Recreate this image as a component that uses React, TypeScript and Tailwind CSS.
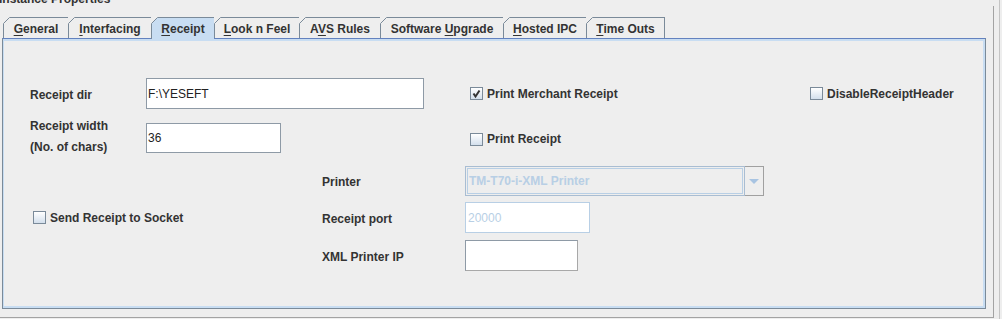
import React from "react";

interface TabDef {
  pre: string;
  key: string;
  post: string;
  width: string;
  selected?: boolean;
  last?: boolean;
}

const tabs: TabDef[] = [
  { pre: "", key: "G", post: "eneral", width: "w-[65px]" },
  { pre: "", key: "I", post: "nterfacing", width: "w-[83px]" },
  { pre: "", key: "R", post: "eceipt", width: "w-[63px]", selected: true },
  { pre: "", key: "L", post: "ook n Feel", width: "w-[85px]" },
  { pre: "A", key: "V", post: "S Rules", width: "w-[81px]" },
  { pre: "Software ", key: "U", post: "pgrade", width: "w-[123px]" },
  { pre: "", key: "H", post: "osted IPC", width: "w-[83px]" },
  { pre: "", key: "T", post: "ime Outs", width: "w-[79px]", last: true },
];

function Tab({ tab }: { tab: TabDef }) {
  return (
    <div
      className={`relative flex items-center justify-center border-l border-t border-[#7a8a99] ${tab.width} ${
        tab.selected ? "z-10 h-[22px] bg-[#c8ddf2]" : "h-[21px] bg-[#eeeeee] pt-[2px]"
      } ${tab.last ? "border-r" : ""}`}
    >
      {/* slanted corner */}
      <svg className="absolute -left-px -top-px" width="7" height="7" viewBox="0 0 7 7">
        <polygon points="0,0 7,0 0,7" fill="#eeeeee" />
        <line x1="0.5" y1="6.5" x2="6.5" y2="0.5" stroke="#7a8a99" strokeWidth="1" />
      </svg>
      <span className="font-bold text-[12px] leading-[14px] text-[#333333]">
        {tab.pre}
        <span className="underline underline-offset-[2px]">{tab.key}</span>
        {tab.post}
      </span>
    </div>
  );
}

function CheckBox({ label, checked }: { label: string; checked?: boolean }) {
  return (
    <div className="flex items-center gap-[4px]">
      <div className="w-[13px] h-[13px] border border-[#7a8a99] bg-linear-to-b from-[#ffffff] to-[#d3dfec] flex items-center justify-center">
        {checked && (
          <svg width="11" height="11" viewBox="0 0 11 11">
            <path d="M2.5 5.5 L4.5 8.5 L8.5 2.5" fill="none" stroke="#333333" strokeWidth="2" />
          </svg>
        )}
      </div>
      <span className="font-bold text-[12px] leading-[14px] text-[#333333]">{label}</span>
    </div>
  );
}

function Label({ children }: { children: React.ReactNode }) {
  return <span className="font-bold text-[12px] leading-[14px] text-[#333333]">{children}</span>;
}

export default function App() {
  return (
    <div
      className="w-[1002px] h-[319px] overflow-hidden bg-[#eeeeee] flex"
      style={{ fontFamily: '"Liberation Sans", Arial, sans-serif' }}
    >
      <div className="w-[994px] shrink-0 flex flex-col">
        {/* titled border caption */}
        <div className="-mt-[8px] -ml-[1px] h-[14px] font-bold text-[12px] leading-[14px] text-[#333333] whitespace-nowrap">
          Instance Properties
        </div>

        {/* titled border box */}
        <div className="-ml-[10px] w-[1004px] h-[312px] border-r border-b border-[#a3a3a3] pl-[12px] pt-[11px]">
          {/* tab strip */}
          <div className="flex items-start h-[21px] ml-px">
            {tabs.map((t) => (
              <Tab key={t.key + t.post} tab={t} />
            ))}
          </div>

          {/* content panel */}
          <div className="w-[984px] h-[271px] border border-[#7a8a99] border-t-[#6382bf]">
            <div className="h-full border-t-2 border-l border-r-2 border-b-2 border-[#c8ddf2] pt-[37px]">
              {/* row 1 */}
              <div className="flex items-center h-[31px] pl-[26px]">
                <div className="w-[116px]">
                  <Label>Receipt dir</Label>
                </div>
                <div className="w-[278px] h-[31px] border border-[#8e9aa6] bg-white flex items-center pl-[1px] text-[12px] text-[#222222]">
                  F:\YESEFT
                </div>
                <div className="ml-[46px] w-[340px]">
                  <CheckBox label="Print Merchant Receipt" checked />
                </div>
                <CheckBox label="DisableReceiptHeader" />
              </div>

              {/* row 2 */}
              <div className="flex items-start h-[42px] mt-[7px] pl-[26px]">
                <div className="w-[116px] flex flex-col font-bold text-[12px] leading-[21px] text-[#333333]">
                  <span>Receipt width</span>
                  <span>(No. of chars)</span>
                </div>
                <div className="mt-[7px] w-[135px] h-[30px] border border-[#8e9aa6] bg-white flex items-center pl-[1px] text-[12px] text-[#222222]">
                  36
                </div>
                <div className="ml-[189px] mt-[16px]">
                  <CheckBox label="Print Receipt" />
                </div>
              </div>

              {/* row 3 */}
              <div className="flex items-center h-[30px] mt-[8px]">
                <div className="w-[318px]" />
                <div className="w-[143px]">
                  <Label>Printer</Label>
                </div>
                <div className="flex w-[299px] h-[30px]">
                  <div className="flex-1 border border-[#a9bdd2] bg-[#eeeeee] p-px">
                    <div className="h-full border border-[#b8cfe5] flex items-center pl-px font-bold text-[12px] text-[#b8cfe5]">
                      TM-T70-i-XML Printer
                    </div>
                  </div>
                  <div className="w-[19px] border-y border-r border-[#a0a0a0] flex items-center justify-center">
                    <svg width="10" height="5" viewBox="0 0 10 5">
                      <polygon points="0,0 10,0 5,5" fill="#a8c4e2" />
                    </svg>
                  </div>
                </div>
              </div>

              {/* row 4 */}
              <div className="flex items-center h-[31px] mt-[6px]">
                <div className="w-[318px] pl-[29px]">
                  <CheckBox label="Send Receipt to Socket" />
                </div>
                <div className="w-[143px]">
                  <Label>Receipt port</Label>
                </div>
                <div className="w-[125px] h-[31px] border border-[#b8cfe5] bg-white flex items-center pl-[2px] text-[12px] text-[#b8cfe5]">
                  20000
                </div>
              </div>

              {/* row 5 */}
              <div className="flex items-center h-[31px] mt-[7px]">
                <div className="w-[318px]" />
                <div className="w-[143px]">
                  <Label>XML Printer IP</Label>
                </div>
                <div className="w-[113px] h-[31px] border border-[#8e9aa6] border-r-[#a8a8a8] border-b-[#a8a8a8] bg-white" />
              </div>
            </div>
          </div>
        </div>
      </div>
      <div className="w-[6px] shrink-0 border-r border-[#c4c4c4]" />
    </div>
  );
}
